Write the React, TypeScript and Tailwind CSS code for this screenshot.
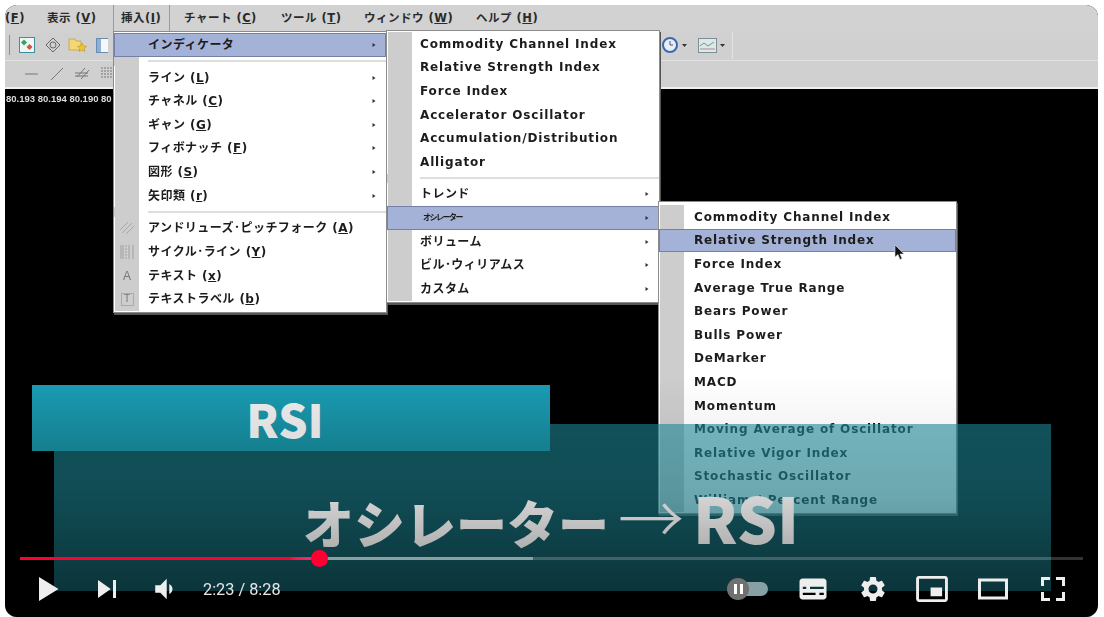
const UI_FONT = "[font-family:'DejaVu_Sans','Noto_Sans_CJK_JP',sans-serif]";

type Item = { t?: string; k?: string; arrow?: boolean; active?: boolean; sep?: boolean; tiny?: boolean; icon?: string };

const MENU_BAR = [
  { t: "", k: "F", w: "w-[42px]" },
  { t: "表示 ", k: "V", w: "w-[65px]" },
  { t: "挿入", k: "I", w: "ml-[1px] w-[57px] border-x border-[#9a9a9a] pl-[7px]" },
  { t: "チャート ", k: "C", w: "w-[111px] pl-[14px]" },
  { t: "ツール ", k: "T", w: "w-[83px]" },
  { t: "ウィンドウ ", k: "W", w: "w-[112px]" },
  { t: "ヘルプ ", k: "H", w: "w-[80px]" },
];

const INSERT_MENU: Item[] = [
  { t: "インディケータ", arrow: true, active: true },
  { sep: true },
  { t: "ライン ", k: "L", arrow: true },
  { t: "チャネル ", k: "C", arrow: true },
  { t: "ギャン ", k: "G", arrow: true },
  { t: "フィボナッチ ", k: "F", arrow: true },
  { t: "図形 ", k: "S", arrow: true },
  { t: "矢印類 ", k: "r", arrow: true },
  { sep: true },
  { t: "アンドリューズ･ピッチフォーク ", k: "A", icon: "fork" },
  { t: "サイクル･ライン ", k: "Y", icon: "cycle" },
  { t: "テキスト ", k: "x", icon: "text" },
  { t: "テキストラベル ", k: "b", icon: "label" },
];

const INDICATOR_MENU: Item[] = [
  { t: "Commodity Channel Index" },
  { t: "Relative Strength Index" },
  { t: "Force Index" },
  { t: "Accelerator Oscillator" },
  { t: "Accumulation/Distribution" },
  { t: "Alligator" },
  { sep: true },
  { t: "トレンド", arrow: true },
  { t: "オシレーター", arrow: true, active: true, tiny: true },
  { t: "ボリューム", arrow: true },
  { t: "ビル･ウィリアムス", arrow: true },
  { t: "カスタム", arrow: true },
];

const OSCILLATOR_MENU: Item[] = [
  { t: "Commodity Channel Index" },
  { t: "Relative Strength Index", active: true },
  { t: "Force Index" },
  { t: "Average True Range" },
  { t: "Bears Power" },
  { t: "Bulls Power" },
  { t: "DeMarker" },
  { t: "MACD" },
  { t: "Momentum" },
  { t: "Moving Average of Oscillator" },
  { t: "Relative Vigor Index" },
  { t: "Stochastic Oscillator" },
  { t: "Williams' Percent Range" },
];

function GutterIcon({ name }: { name?: string }) {
  if (name === "fork")
    return (
      <svg width="16" height="16" viewBox="0 0 16 16" stroke="#a8a8a8" fill="none">
        <path d="M1 10 9 2M3 13 13 3M7 14 15 6" />
      </svg>
    );
  if (name === "cycle")
    return (
      <svg width="16" height="16" viewBox="0 0 16 16" stroke="#a0a0a0" fill="none">
        <path d="M2 1v14M4 1v14M10 1v14M14 1v14" />
        <path d="M7 1v14" strokeDasharray="2 1" />
      </svg>
    );
  if (name === "text") return <span className="text-[12px] leading-none text-[#777] font-['Liberation_Sans',sans-serif]">A</span>;
  if (name === "label")
    return (
      <span className="flex h-[13px] w-[13px] items-center justify-center border border-[#aaa] text-[10px] leading-none text-[#777] font-['Liberation_Sans',sans-serif]">
        T
      </span>
    );
  return null;
}

function Menu({ items, className, sepH, textPad }: { items: Item[]; className: string; sepH: string; textPad: string }) {
  return (
    <div className={`absolute border border-[#8c8c8c] bg-white shadow-[1px_2px_0_#555] ${className}`}>
      {items.map((item, i) =>
        item.sep ? (
          <div key={i} className={`flex ${sepH}`}>
            <div className="w-[25px] shrink-0 bg-[#cdcdcd]" />
            <div className={`flex flex-1 items-center ${textPad}`}>
              <div className="h-[2px] w-full bg-[#dedede]" />
            </div>
          </div>
        ) : (
          <div
            key={i}
            className={`flex h-[23.6px] items-center border ${
              item.active ? "border-[#7480a8] bg-[#a5b2d8]" : "border-transparent"
            }`}
          >
            <div className={`flex h-[23.6px] w-[24px] shrink-0 items-center justify-center ${item.active ? "" : "bg-[#cdcdcd]"}`}>
              <GutterIcon name={item.icon} />
            </div>
            <span
              className={`flex-1 whitespace-nowrap font-bold text-[#1c1c1c] ${textPad} ${
                item.tiny
                  ? "ml-[3px] text-[8px] tracking-[-1.5px]"
                  : /^[\x00-\x7f]+$/.test(item.t ?? "")
                    ? "text-[12px] tracking-[0.85px]"
                    : "text-[12px] tracking-[0.45px]"
              }`}
            >
              {item.t}
              {item.k && (
                <>
                  (<span className="underline">{item.k}</span>)
                </>
              )}
            </span>
            {item.arrow && (
              <svg width="4" height="6" viewBox="0 0 4 6" className="mr-[9px] shrink-0" fill="#333">
                <path d="M0.5 1 3.500 3 0.5 5z" />
              </svg>
            )}
          </div>
        ),
      )}
    </div>
  );
}

function ToolbarOne() {
  return (
    <div className="flex h-[27px] items-center bg-[#d0d0d0] pb-[3px] pl-[4px]">
      <div className="mr-[9px] h-[20px] w-px bg-[#8e8e8e]" />
      <svg width="16" height="16" viewBox="0 0 16 16" className="mr-[10px]">
        <rect x="0.5" y="0.5" width="15" height="15" fill="#eef6f6" stroke="#3d8f9e" />
        <path d="M5 2.500 8 5.500 5 8.500 2 5.500z" fill="#3aa35a" />
        <path d="M10.500 7 13.500 10 10.500 13 7.500 10z" fill="#d2553f" />
      </svg>
      <svg width="16" height="16" viewBox="0 0 16 16" className="mr-[7px]" fill="none" stroke="#666">
        <path d="M8 1 15 8 8 15 1 8z" />
        <circle cx="8" cy="8" r="3" />
      </svg>
      <svg width="20" height="17" viewBox="0 0 20 17" className="mr-[8px]">
        <path d="M1 2h6l1 2h5v9H1z" fill="#f2d774" stroke="#c9ad4d" />
        <path d="M14 6l1.500 3 3 .4-2.200 2.100.6 3L14 13l-2.900 1.500.6-3-2.200-2.100 3-.4z" fill="#f3c52c" stroke="#a9862a" strokeWidth="0.5" />
      </svg>
      <svg width="12" height="15" viewBox="0 0 12 15">
        <rect x="0.5" y="0.5" width="14" height="14" fill="#f7f7f7" stroke="#6a8bb0" />
        <rect x="1" y="1" width="4" height="13" fill="#8cb0dc" />
      </svg>
      <div className="ml-[553px] flex items-center">
        <svg width="18" height="18" viewBox="0 0 18 18" fill="#e8eef8" stroke="#3a68b0" strokeWidth="2">
          <circle cx="9" cy="9" r="7" />
          <path d="M9 5v4h3" fill="none" stroke="#555" strokeWidth="1" />
        </svg>
        <svg width="5" height="3" viewBox="0 0 5 3" className="ml-[3px]" fill="#333">
          <path d="M0 0h5L2.500 3z" />
        </svg>
        <svg width="19" height="15" viewBox="0 0 19 15" className="ml-[11px]">
          <rect x="0.5" y="0.5" width="18" height="14" fill="#dfe8e8" stroke="#7b8f96" />
          <path d="M2 8 6 5l4 3 6-4" fill="none" stroke="#6a9a78" />
          <path d="M2 11h15" stroke="#b08a8a" />
        </svg>
        <svg width="5" height="3" viewBox="0 0 5 3" className="ml-[3px]" fill="#333">
          <path d="M0 0h5L2.500 3z" />
        </svg>
        <div className="ml-[7px] h-[27px] w-px bg-[#e4e4e4]" />
      </div>
    </div>
  );
}

function ToolbarTwo() {
  return (
    <div className="flex h-[27px] items-center border-t border-[#e2e2e2] bg-[#d0d0d0] pl-[20px]">
      <svg width="96" height="18" viewBox="0 0 96 18" fill="none" stroke="#777">
        <path d="M0 9h13M26 15 38 3" />
        <path d="M52 12 60 3M56 14 64 5M50 8h13M50 11h13" />
        <path d="M76 3h14M76 6h14M76 9h14M76 12h14" strokeDasharray="2 1" />
      </svg>
    </div>
  );
}

function Icon({ d, className = "h-[54px] w-[54px]" }: { d: string; className?: string }) {
  return (
    <svg viewBox="0 0 36 36" className={`shrink-0 ${className}`} fill="#eeeeee" fillRule="evenodd">
      <path d={d} />
    </svg>
  );
}

function Controls() {
  return (
    <div className="absolute inset-x-0 bottom-0">
      <div className="relative mx-[15px] h-[3px] bg-white/20">
        <div className="absolute inset-y-0 left-0 w-[513px] bg-white/40" />
        <div className="absolute inset-y-0 left-0 w-[300px] bg-gradient-to-r from-[#ff0033] from-90% to-[#e0308a]" />
        <div className="absolute left-[291px] top-[-7px] h-[17px] w-[17px] rounded-full bg-[#ff0033]" />
      </div>
      <div className="mb-[2px] flex h-[55px] items-center pt-[3px]">
        <div className="flex items-center pl-[16px]">
          <Icon d="M12 26 18.500 22V14L12 10zM18.500 22 25 18 18.500 14z" />
          <Icon d="M12 24 20.500 18 12 12zM22 12v12h2V12z" className="ml-[5px] h-[54px] w-[54px]" />
          <Icon d="M8 21h4l5 5V10l-5 5H8zM19 14v8c1.480-.68 2.500-2.230 2.500-4s-1.020-3.260-2.500-4z" className="ml-[11px] h-[46px] w-[46px]" />
          <span className="ml-[12px] whitespace-nowrap pt-[3px] font-['Roboto',sans-serif] text-[16.3px] text-[#e6e6e6]">2:23 / 8:28</span>
        </div>
        <div className="ml-auto flex items-center pr-[18px]">
          <div className="relative mr-[18px] h-[22px] w-[41px]">
            <div className="absolute right-0 top-[4px] h-[14px] w-[31px] rounded-full bg-[#87a0a5]" />
            <div className="absolute left-0 top-0 flex h-[22px] w-[22px] items-center justify-center gap-[3px] rounded-full bg-[#707070]">
              <div className="h-[10px] w-[3px] bg-white" />
              <div className="h-[10px] w-[3px] bg-white" />
            </div>
          </div>
          <Icon d="M11 11c-1.100 0-2 .9-2 2v10c0 1.100.9 2 2 2h14c1.100 0 2-.9 2-2V13c0-1.100-.9-2-2-2zM11.200 16.500h2.300V18h-2.300zM16 16.500h9.200V18H16zM11.200 20.500h8.500V22h-8.500zM22.300 20.500h2.900V22h-2.900z" />
          <Icon d="m23.940 18.780c.03-.25.05-.51.05-.78 0-.27-.02-.52-.05-.78l1.680-1.320c.15-.12.19-.33.09-.51l-1.600-2.760c-.09-.17-.31-.24-.48-.17l-1.990.8c-.41-.32-.86-.58-1.350-.78l-.3-2.120c-.02-.19-.19-.33-.39-.33h-3.200c-.2 0-.36.14-.39.33l-.3 2.120c-.48.2-.93.47-1.350.78l-1.990-.8c-.18-.07-.39 0-.48.17l-1.600 2.760c-.1.17-.05.39.09.51l1.680 1.320c-.03.25-.05.52-.05.78 0 .26.02.52.05.78l-1.680 1.320c-.15.12-.19.33-.09.51l1.600 2.760c.09.17.31.24.48.17l1.990-.8c.41.32.86.58 1.350.78l.3 2.120c.02.19.19.33.39.33h3.200c.2 0 .36-.14.39-.33l.3-2.120c.48-.2.93-.47 1.350-.78l1.990.8c.18.07.39 0 .48-.17l1.600-2.760c.09-.17.05-.39-.09-.51zM18 21a3 3 0 1 1 0-6 3 3 0 0 1 0 6z" className="ml-[6px] h-[54px] w-[54px]" />
          <Icon d="M25 17h-8v6h8zM29 25V10.980C29 9.880 28.100 9 27 9H9c-1.100 0-2 .88-2 1.980V25c0 1.100.9 2 2 2h18c1.100 0 2-.9 2-2zm-2 .02H9V10.970h18z" className="ml-[6px] h-[52px] w-[52px]" />
          <Icon d="M28 11v14H8V11zM10 13v10h16V13z" className="ml-[8px] h-[54px] w-[54px]" />
          <Icon d="M10 16h2v-4h4v-2h-6zM20 10v2h4v4h2v-6zM24 24h-4v2h6v-6h-2zM12 20h-2v6h6v-2h-4z" className="ml-[6px] h-[54px] w-[54px]" />
        </div>
      </div>
    </div>
  );
}

export default function App() {
  return (
    <div className="h-[617px] w-[1104px] overflow-hidden bg-white pl-[5px] pt-[5px]">
      <div className={`relative h-[612px] w-[1093px] overflow-hidden rounded-xl bg-black ${UI_FONT}`}>
        <div className="absolute inset-0 blur-[0.45px]">
          {/* Menu bar */}
          <div className="flex h-[28px] items-center bg-[#d2d2d2] text-[11.5px] font-bold text-[#2a2a2a]">
            {MENU_BAR.map((m) => (
              <div key={m.k} className={`flex h-[28px] items-center whitespace-nowrap tracking-[0.5px] ${m.w}`}>
                {m.t}(<span className="underline">{m.k}</span>)
              </div>
            ))}
          </div>
          <ToolbarOne />
          <ToolbarTwo />
          <div className="h-[2px] bg-[#eeeeee]" />
          <div className="pl-[1px] pt-[4px] text-[9.5px] font-bold leading-[12px] text-[#dcdcdc] font-['Liberation_Sans',sans-serif]">
            80.193 80.194 80.190 80
          </div>

          <Menu items={INSERT_MENU} className="left-[108px] top-[26px] w-[274px] py-px" sepH="h-[9.200px]" textPad="pl-[9px]" />
          <Menu items={INDICATOR_MENU} className="left-[381px] top-[25px] w-[274px] py-px" sepH="h-[9px]" textPad="pl-[8px]" />
          <Menu items={OSCILLATOR_MENU} className="left-[653px] top-[196px] w-[299px] pb-px pt-[3px]" sepH="h-0" textPad="pl-[10px]" />

          {/* Cursor */}
          <svg width="11" height="17" viewBox="0 0 11 17" className="absolute left-[889px] top-[239px]">
            <path d="M1 1v12l3-2.500 2 5 2-1-2-4.500h4z" fill="#111" stroke="#ddd" strokeWidth="0.6" />
          </svg>

          {/* Lower third */}
          <div className="absolute left-[49px] top-[419px] flex h-[167px] w-[997px] items-baseline justify-center bg-gradient-to-b from-[#1f8d9b]/60 to-[#1f8d9b]/60 pr-[3px] pt-[58px] font-['Noto_Sans_CJK_JP',sans-serif] font-black leading-none text-[#ececec]">
            <span className="text-[51px]">オシレーター</span>
            <span className="mx-[9px] text-[66px] font-light">→</span>
            <span className="text-[63px]">RSI</span>
          </div>
          <div className="absolute left-[27px] top-[380px] flex h-[66px] w-[518px] items-center justify-center bg-gradient-to-b from-[#1a9cb5] to-[#178898] pr-[12px] font-['Noto_Sans_CJK_JP',sans-serif] text-[46px] font-black leading-none text-[#ececec]">
            RSI
          </div>
        </div>

        {/* Player chrome */}
        <div className="absolute inset-x-0 bottom-0 h-[240px] bg-gradient-to-b from-transparent via-black/10 to-black/45" />
        <Controls />
      </div>
    </div>
  );
}
